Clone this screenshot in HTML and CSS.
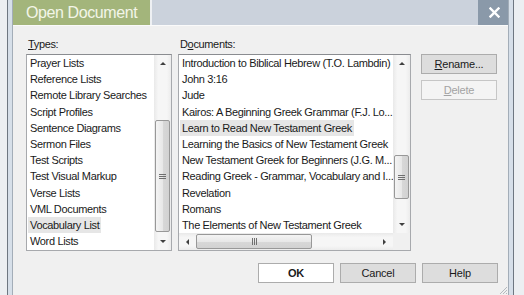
FILE: index.html
```html
<!DOCTYPE html>
<html lang="en">
<head>
    <meta charset="UTF-8">
    <meta name="viewport" content="width=device-width, initial-scale=1.0">
    <title>Open Document</title>
    <link rel="stylesheet" href="styles.css">
</head>
<body>
    <div class="frame">
        <div class="dialog">
            <div class="titlebar">
                <div class="title-tab">Open Document</div>
                <div class="title-fill"></div>
                <div class="close-btn">
                    <svg width="11" height="11" viewBox="0 0 11 11">
                        <path d="M1.5 1.5 L9.5 9.5 M9.5 1.5 L1.5 9.5" stroke="#fff" stroke-width="2.4" stroke-linecap="square"/>
                    </svg>
                </div>
            </div>

            <div class="content">
                <div class="columns">
                    <div class="types-col">
                        <div class="field-label"><u>T</u>ypes:</div>
                        <div class="listbox types-list">
                            <ul class="items">
                                <li>Prayer Lists</li>
                                <li>Reference Lists</li>
                                <li>Remote Library Searches</li>
                                <li>Script Profiles</li>
                                <li>Sentence Diagrams</li>
                                <li>Sermon Files</li>
                                <li>Test Scripts</li>
                                <li>Test Visual Markup</li>
                                <li>Verse Lists</li>
                                <li>VML Documents</li>
                                <li><span class="selected">Vocabulary List</span></li>
                                <li>Word Lists</li>
                            </ul>
                            <div class="vscroll">
                                <div class="arrow"><span class="tri-up"></span></div>
                                <div class="track">
                                    <div class="thumb"><span class="grip"></span></div>
                                </div>
                                <div class="arrow"><span class="tri-down"></span></div>
                            </div>
                        </div>
                    </div>

                    <div class="docs-col">
                        <div class="field-label">D<u>o</u>cuments:</div>
                        <div class="listbox docs-list">
                            <ul class="items">
                                <li>Introduction to Biblical Hebrew (T.O. Lambdin)</li>
                                <li>John 3:16</li>
                                <li>Jude</li>
                                <li>Kairos: A Beginning Greek Grammar (F.J. Lo...</li>
                                <li><span class="selected">Learn to Read New Testament Greek</span></li>
                                <li>Learning the Basics of New Testament Greek</li>
                                <li>New Testament Greek for Beginners (J.G. M...</li>
                                <li>Reading Greek - Grammar, Vocabulary and I...</li>
                                <li>Revelation</li>
                                <li>Romans</li>
                                <li>The Elements of New Testament Greek</li>
                            </ul>
                            <div class="vscroll">
                                <div class="arrow"><span class="tri-up"></span></div>
                                <div class="track">
                                    <div class="thumb"><span class="grip"></span></div>
                                </div>
                                <div class="arrow"><span class="tri-down"></span></div>
                            </div>
                            <div class="hscroll">
                                <div class="arrow"><span class="tri-left"></span></div>
                                <div class="track">
                                    <div class="thumb"><span class="grip"></span></div>
                                </div>
                                <div class="arrow"><span class="tri-right"></span></div>
                            </div>
                            <div class="corner"></div>
                        </div>
                    </div>

                    <div class="side-buttons">
                        <button class="btn"><u>R</u>ename...</button>
                        <button class="btn" disabled><u>D</u>elete</button>
                    </div>
                </div>

                <div class="footer">
                    <button class="btn btn-default">OK</button>
                    <button class="btn">Cancel</button>
                    <button class="btn">Help</button>
                </div>

                <svg class="size-grip" width="10" height="10" viewBox="0 0 10 10">
                    <path d="M9 2 L2 9 M9 5 L5 9 M9 8 L8 9" stroke="#b4b9bf" stroke-width="1"/>
                </svg>
            </div>
        </div>
    </div>
</body>
</html>
```

FILE: styles.css
```css
* {
    margin: 0;
    padding: 0;
    box-sizing: border-box;
}

body {
    width: 524px;
    height: 295px;
    overflow: hidden;
    background: #eceff2;
    font-family: 'Liberation Sans', Arial, sans-serif;
    font-size: 11px;
    letter-spacing: -0.35px;
    color: #1a1a1a;
}

.frame {
    margin-left: 7px;
    width: 507px;
    height: 295px;
    border-left: 1px solid #6e7781;
    border-right: 1px solid #6e7781;
    background: #d6dfe9;
    padding: 0 4px;
}

.dialog {
    height: 100%;
    border-left: 1px solid #a3adb8;
    border-right: 1px solid #a3adb8;
    background: #f0f0f0;
    display: flex;
    flex-direction: column;
}

/* title bar */

.titlebar {
    display: flex;
    height: 25px;
    flex-shrink: 0;
}

.title-tab {
    width: 137px;
    background: #a3b57b;
    color: #f3f5e8;
    font-size: 16px;
    letter-spacing: -0.4px;
    line-height: 25px;
    padding-left: 13px;
}

.title-fill {
    flex: 1;
    margin-left: 2px;
    background: #cbd2dc;
    box-shadow: -2px 0 0 #eef0f3;
}

.close-btn {
    width: 30px;
    background: #8a99a9;
    display: flex;
    align-items: center;
    justify-content: center;
    padding-left: 3px;
}

.content {
    position: relative;
    flex: 1;
    border-top: 1px solid #fafafa;
    padding: 11px 10px 0 13px;
}

.columns {
    display: flex;
}

.field-label {
    line-height: 14px;
    padding-left: 2px;
    margin-bottom: 3px;
}

/* list boxes */

.listbox {
    height: 197px;
    background: #fff;
    border: 1px solid #a7a9ad;
    border-top-color: #8a8c90;
    overflow: hidden;
}

.types-col {
    width: 146px;
}

.docs-col {
    width: 233px;
    margin-left: 6px;
}

.types-list {
    display: flex;
}

.docs-list {
    display: grid;
    grid-template-columns: 1fr 17px;
    grid-template-rows: 1fr 17px;
}

.items {
    list-style: none;
    flex: 1;
    min-width: 0;
    overflow: hidden;
    padding-left: 3px;
}

.items li {
    height: 16.2px;
    line-height: 16px;
    white-space: nowrap;
}

.selected {
    display: inline-block;
    background: #e6e6e6;
    padding: 0 2px;
    margin-left: -2px;
}

/* scroll bars */

.vscroll,
.hscroll {
    display: flex;
    background: linear-gradient(to right, #e9e9e9, #f6f6f6 25%, #f6f6f6 75%, #ececec);
}

.vscroll {
    width: 17px;
    flex-direction: column;
}

.hscroll {
    flex-direction: row;
    background: linear-gradient(to bottom, #e9e9e9, #f6f6f6 25%, #f6f6f6 75%, #ececec);
}

.corner {
    background: #f0f0f0;
}

.arrow {
    width: 17px;
    height: 17px;
    flex-shrink: 0;
    display: flex;
    align-items: center;
    justify-content: center;
}

.tri-up {
    border-left: 3px solid transparent;
    border-right: 3px solid transparent;
    border-bottom: 3px solid #404040;
}

.tri-down {
    border-left: 3px solid transparent;
    border-right: 3px solid transparent;
    border-top: 3px solid #404040;
}

.tri-left {
    border-top: 3px solid transparent;
    border-bottom: 3px solid transparent;
    border-right: 3px solid #404040;
}

.tri-right {
    border-top: 3px solid transparent;
    border-bottom: 3px solid transparent;
    border-left: 3px solid #404040;
}

.track {
    flex: 1;
    position: relative;
}

.thumb {
    border: 1px solid #989898;
    border-radius: 2px;
    display: flex;
    align-items: center;
    justify-content: center;
}

.vscroll .thumb {
    margin: 0 1px;
    background: linear-gradient(to right, #f4f4f4, #e8e8e8 50%, #d8d8d8 51%, #d2d2d2);
}

.hscroll .thumb {
    margin: 1px 0;
    height: 15px;
    background: linear-gradient(to bottom, #f4f4f4, #e8e8e8 50%, #d8d8d8 51%, #d2d2d2);
}

.vscroll .grip {
    width: 7px;
    height: 5px;
    background: repeating-linear-gradient(#6f6f6f 0 1px, transparent 1px 2px);
}

.hscroll .grip {
    width: 5px;
    height: 7px;
    background: repeating-linear-gradient(to right, #6f6f6f 0 1px, transparent 1px 2px);
}

.types-list .thumb {
    margin-top: 48px;
    height: 112px;
}

.docs-list .vscroll .thumb {
    margin-top: 83px;
    height: 44px;
}

.docs-list .hscroll .thumb {
    width: 116px;
}

/* buttons */

.side-buttons {
    margin-left: 10px;
    padding-top: 17px;
    display: flex;
    flex-direction: column;
    gap: 6px;
}

.btn {
    width: 76px;
    height: 20px;
    font-family: inherit;
    font-size: 11px;
    letter-spacing: -0.2px;
    color: #1a1a1a;
    background: #dddddd;
    border: 1px solid #acacac;
}

.btn:disabled {
    background: #f4f4f4;
    border-color: #c6c6c6;
    color: #a3a3a3;
}

.btn-default {
    background: #fff;
    font-weight: bold;
}

.footer {
    display: flex;
    justify-content: flex-end;
    gap: 6px;
    margin-top: 12px;
}

.size-grip {
    position: absolute;
    right: 0;
    bottom: 0;
}
```
